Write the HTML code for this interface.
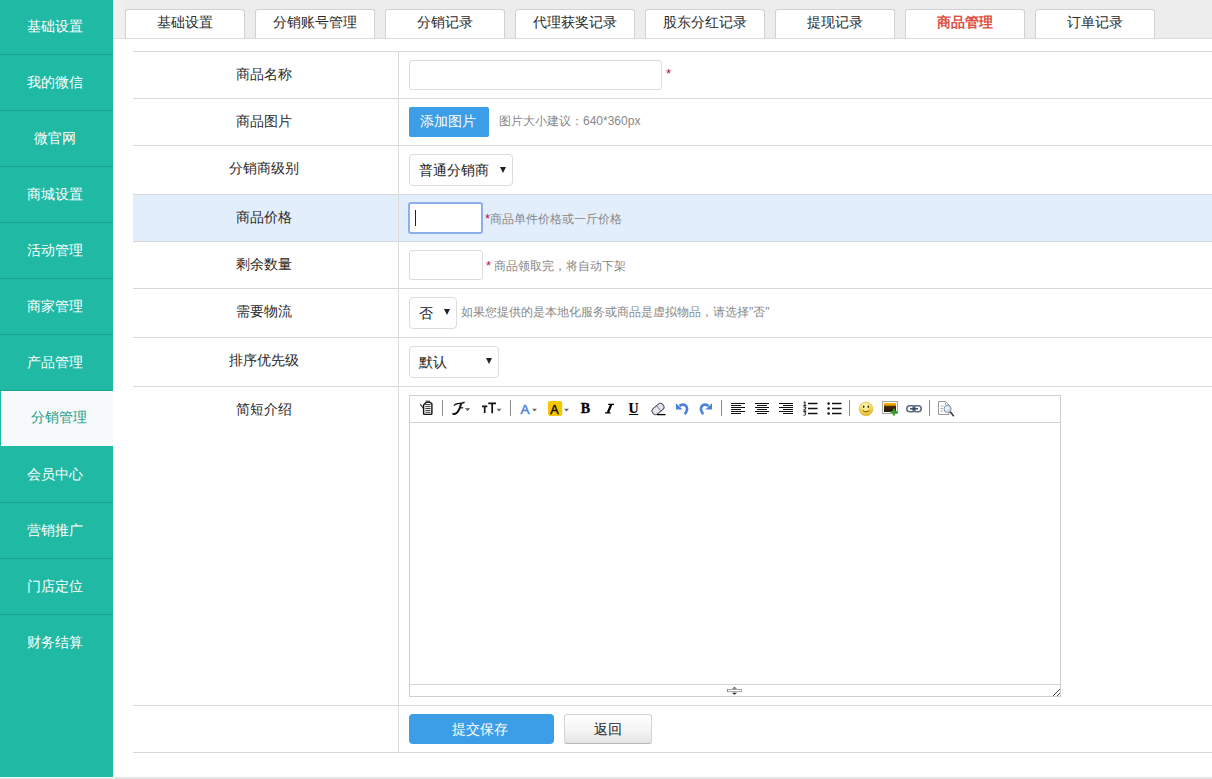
<!DOCTYPE html>
<html><head><meta charset="utf-8">
<style>
*{margin:0;padding:0;box-sizing:border-box}
html,body{width:1212px;height:779px;overflow:hidden;background:#fff;font-family:"Liberation Sans",sans-serif;color:#333}
#side{position:absolute;left:0;top:0;width:113px;height:777px;background:#20b9a4}
#side .it{position:absolute;left:0;width:113px;height:56px;border-bottom:1px solid #16a38f;color:#fff;font-size:14px;line-height:55px;text-align:center;padding-right:3px}
#side .it.on{background:#f6fafa;color:#1a9f8c;border-left:1px solid #20b9a4;padding-left:3px;padding-right:0;border-bottom:0;line-height:53px}
#bottom{position:absolute;left:0;top:777px;width:1212px;height:2px;background:#e6e6e6}
#bottom:before{content:"";position:absolute;left:0;top:0;width:113px;height:1px;background:#e8f8f6}
#tabbar{position:absolute;left:113px;top:0;width:1099px;height:39px;background:#ededed;border-bottom:1px solid #dcdcdc}
.tab{position:absolute;top:9px;width:120px;height:29px;background:#fff;border:1px solid #d2d2d2;border-bottom:0;border-radius:3px 3px 0 0;font-size:14px;line-height:24px;text-align:center;color:#2a2a2a}
.tab.on{color:#de4f43;font-weight:bold}
#tbl{position:absolute;left:133px;top:51px;width:1079px}
.row{position:absolute;left:0;width:1079px;border-top:1px solid #d8d8d8}
.row .lab{position:absolute;left:0;top:0;width:262px;text-align:center;font-size:14px;line-height:20px;padding-top:12px;color:#2a2a2a}
.row .val{position:absolute;left:265px;top:0;bottom:0;border-left:1px solid #e2e2e2;width:814px}
.inp{position:absolute;border:1px solid #dcdcdc;border-radius:3px;background:#fff}
.req{position:absolute;color:#b8123a;font-size:13px}
.hint{position:absolute;color:#888;font-size:12px;white-space:nowrap}
.sel{position:absolute;border:1px solid #dcdcdc;border-radius:4px;background:#fff;font-size:14px;color:#222}
.sel span{position:absolute;left:9px;top:0}
.sel i{position:absolute;width:0;height:0;border-left:3px solid transparent;border-right:3px solid transparent;border-top:6px solid #222}
#vline{position:absolute;left:265px;top:0;width:1px;height:701px;background:#dcdcdc}
.inp.focus{border:2px solid #8eaee8;border-radius:3px}
#caret{position:absolute;left:5px;top:6px;width:1px;height:16px;background:#222}
em.r{font-style:normal;color:#b8123a;font-size:13px}
#addimg{position:absolute;left:409px;top:107px;width:80px;height:30px;background:#3d9ee8;border-radius:2px;color:#fff;font-size:14px;line-height:29px;text-align:center;padding-right:2px}
#editor{position:absolute;left:409px;top:395px;width:652px;height:302px;border:1px solid #cfcfcf;background:#fff}
#tb{position:absolute;left:0;top:0;width:650px;height:27px;border-bottom:1px solid #d4d4d4}
#ebot{position:absolute;left:0;top:288px;width:650px;height:12px;border-top:1px solid #d4d4d4}
#submit{position:absolute;left:409px;top:714px;width:145px;height:30px;background:#3d9ee8;border-radius:4px;color:#fff;font-size:14px;line-height:30px;text-align:center;padding-right:3px}
#back{position:absolute;left:564px;top:714px;width:88px;height:30px;background:linear-gradient(#fefefe,#f4f4f4 55%,#e4e4e4);border:1px solid #d4d4d4;border-bottom-color:#b8b8b8;border-radius:3px;color:#222;font-size:14px;line-height:28px;text-align:center}
</style></head><body>
<div id="side">
<div class="it" style="top:-1px">基础设置</div>
<div class="it" style="top:55px">我的微信</div>
<div class="it" style="top:111px">微官网</div>
<div class="it" style="top:167px">商城设置</div>
<div class="it" style="top:223px">活动管理</div>
<div class="it" style="top:279px">商家管理</div>
<div class="it" style="top:335px">产品管理</div>
<div class="it on" style="top:391px;height:55px">分销管理</div>
<div class="it" style="top:447px">会员中心</div>
<div class="it" style="top:503px">营销推广</div>
<div class="it" style="top:559px">门店定位</div>
<div class="it" style="top:615px;border-bottom:0">财务结算</div>
</div>
<div id="bottom"></div>
<div id="tabbar"><div style="position:absolute;left:0;top:0;width:11px;height:38px;background:#f1eff0"></div>
<div class="tab" style="left:12px">基础设置</div>
<div class="tab" style="left:142px">分销账号管理</div>
<div class="tab" style="left:272px">分销记录</div>
<div class="tab" style="left:402px">代理获奖记录</div>
<div class="tab" style="left:532px">股东分红记录</div>
<div class="tab" style="left:662px">提现记录</div>
<div class="tab on" style="left:792px">商品管理</div>
<div class="tab" style="left:922px">订单记录</div>
</div>

<div id="tbl">
<div class="row" style="top:0;height:47px"><div class="lab">商品名称</div></div>
<div class="row" style="top:47px;height:47px"><div class="lab">商品图片</div></div>
<div class="row" style="top:94px;height:49px"><div class="lab">分销商级别</div></div>
<div class="row" style="top:143px;height:47px;background:#e2eefb"><div class="lab">商品价格</div></div>
<div class="row" style="top:190px;height:47px"><div class="lab">剩余数量</div></div>
<div class="row" style="top:237px;height:49px"><div class="lab">需要物流</div></div>
<div class="row" style="top:286px;height:49px"><div class="lab">排序优先级</div></div>
<div class="row" style="top:335px;height:319px"><div class="lab">简短介绍</div></div>
<div class="row" style="top:654px;height:47px"></div>
<div class="row" style="top:701px;height:1px"></div>
<div id="vline"></div>
</div>
<!-- controls (absolute page coords) -->
<div class="inp" style="left:409px;top:60px;width:253px;height:30px"></div>
<div class="req" style="left:666px;top:66px">*</div>
<div id="addimg">添加图片</div>
<div class="hint" style="left:499px;top:113px">图片大小建议：640*360px</div>
<div class="sel" style="left:409px;top:154px;width:104px;height:32px"><span style="line-height:30px">普通分销商</span><i style="left:90px;top:12px"></i></div>
<div class="inp focus" style="left:408px;top:202px;width:75px;height:32px"><b id="caret"></b></div>
<div class="hint" style="left:485px;top:211px"><em class="r">*</em>商品单件价格或一斤价格</div>
<div class="inp" style="left:409px;top:250px;width:74px;height:30px"></div>
<div class="hint" style="left:486px;top:258px"><em class="r">*</em> 商品领取完，将自动下架</div>
<div class="sel" style="left:409px;top:297px;width:48px;height:32px"><span style="line-height:30px">否</span><i style="left:34px;top:11px"></i></div>
<div class="hint" style="left:461px;top:304px">如果您提供的是本地化服务或商品是虚拟物品，请选择"否"</div>
<div class="sel" style="left:409px;top:346px;width:90px;height:32px"><span style="line-height:30px">默认</span><i style="left:76px;top:11px"></i></div>
<div id="editor">
<div id="tb"><svg id="tbsvg" width="652" height="28" viewBox="409 395 652 28" style="position:absolute;left:-1px;top:-1px">
<defs>
<radialGradient id="smg" cx="0.45" cy="0.3" r="0.75"><stop offset="0" stop-color="#fffbd0"/><stop offset="0.5" stop-color="#f8e060"/><stop offset="1" stop-color="#e0b020"/></radialGradient>
<linearGradient id="img" x1="0" y1="0" x2="0" y2="1"><stop offset="0" stop-color="#ffc000"/><stop offset="0.25" stop-color="#e89000"/><stop offset="0.4" stop-color="#3a2608"/><stop offset="1" stop-color="#24180a"/></linearGradient>
<radialGradient id="mg" cx="0.4" cy="0.4" r="0.6"><stop offset="0" stop-color="#ffffff"/><stop offset="1" stop-color="#b8cbe0"/></radialGradient>
</defs>
<g fill="none" stroke="#8e8e8e" stroke-width="1" shape-rendering="crispEdges">
<path d="M442.5 400V416M510.5 400V416M721.5 400V416M849.5 400V416M929.5 400V416"/>
</g>
<!-- paste -->
<path d="M420.3 404.3L424 409" stroke="#333" stroke-width="1.2"/>
<path d="M424.8 403.8L426.2 402.4H430.3L431.9 403.8V413.6Q431.9 414.4 431.1 414.4H424.5Q423.6 414.4 423.6 413.6V405Z" fill="#fff" stroke="#111" stroke-width="1.4"/>
<rect x="425.6" y="400.6" width="4.4" height="1.8" fill="#555"/>
<path d="M425.3 404.6H430.5M425.3 406.6H430.5M425.3 408.5H430.5M425.3 410.4H430.5M425.3 412.3H430.5" stroke="#222" stroke-width="0.9"/>
<!-- font family -->
<path d="M454 405.6C455 403.6 458 403.5 460.5 403.3C462 403.2 463.5 402.8 464.6 402.1" stroke="#111" stroke-width="1.3" fill="none"/>
<path d="M461.2 403.3C460.2 407 459.2 411 456.6 413C455.1 414.2 453.6 414.1 452.4 413.6" stroke="#111" stroke-width="2" fill="none"/>
<path d="M459.3 407.8H463.2" stroke="#111" stroke-width="1.2"/>
<path d="M465 408.2H470.2L467.6 411Z" fill="#555"/>
<!-- font size -->
<path d="M482 406.3H487.3M484.7 406.3V413" stroke="#111" stroke-width="1.7"/>
<path d="M488.3 403.3H496M492.2 403.3V413.3" stroke="#111" stroke-width="1.7"/>
<path d="M496.5 408.8H501.5L499 411.6Z" fill="#666"/>
<!-- font color -->
<text x="520.5" y="413.8" font-family="Liberation Sans" font-size="13.5" fill="#4f83d9" stroke="#4f83d9" stroke-width="0.5">A</text>
<path d="M532 408.8H537L534.5 411.6Z" fill="#666"/>
<!-- back color -->
<rect x="548" y="401" width="14.2" height="15" rx="2" fill="#f8c600"/>
<text x="550.3" y="413.6" font-family="Liberation Sans" font-size="12.5" fill="#111" stroke="#111" stroke-width="0.5">A</text>
<path d="M564 408.8H569L566.5 411.6Z" fill="#666"/>
<!-- bold -->
<text x="580.7" y="413" font-family="Liberation Serif" font-weight="bold" font-size="14" fill="#000" stroke="#000" stroke-width="0.3">B</text>
<!-- italic -->
<path d="M608.3 404.4H614M605 412.9H610.5" stroke="#000" stroke-width="1.3"/>
<path d="M611.3 404.5L607.8 412.8" stroke="#000" stroke-width="2.2"/>
<!-- underline -->
<text x="628.4" y="412.9" font-family="Liberation Serif" font-weight="bold" font-size="14" fill="#000" stroke="#000" stroke-width="0.2">U</text>
<path d="M629 414.5H638.2" stroke="#000" stroke-width="1"/>
<!-- eraser -->
<g transform="rotate(-40 658 409)"><rect x="651.5" y="405.5" width="13" height="7" rx="3" fill="#e4e8f2" stroke="#555" stroke-width="1"/><path d="M659 405.5V412.5" stroke="#666" stroke-width="0.8"/></g>
<path d="M657 414.6H665.5" stroke="#000" stroke-width="1.3"/>
<!-- undo -->
<path d="M679.5 405.8C685 402.5 690 407 684.8 414.3" stroke="#4a82d8" stroke-width="2.6" fill="none"/>
<path d="M676 403.3L676 409.6L682.6 409.6Z" fill="#4a82d8"/>
<!-- redo -->
<path d="M708.5 405.8C703 402.5 698 407 703.2 414.3" stroke="#4a82d8" stroke-width="2.6" fill="none"/>
<path d="M712 403.3L712 409.6L705.4 409.6Z" fill="#4a82d8"/>
<!-- align -->
<g stroke="#111" stroke-width="1" shape-rendering="crispEdges">
<path d="M731 403.5H745M731 405.5H741M731 407.5H745M731 409.5H741M731 411.5H745M731 413.5H741"/>
<path d="M755 403.5H769M757 405.5H767M755 407.5H769M757 409.5H767M755 411.5H769M757 413.5H767"/>
<path d="M779 403.5H793M783 405.5H793M779 407.5H793M783 409.5H793M779 411.5H793M783 413.5H793"/>
</g>
<g stroke="#111" stroke-width="1.4">
<path d="M808 403.5H817.5M808 408.5H817.5M808 413.5H817.5"/>
<path d="M832 403.5H841.5M832 408.5H841.5M832 413.5H841.5"/>
</g>
<path d="M803.6 402.6L805 401.8V405.6M803.4 405.6H806.3M803.4 407H805.8V408.3L803.6 410H806.2M803.4 411.6H806L804.6 413.1C806.6 413.2 806.4 415.4 803.4 415.2" fill="none" stroke="#111" stroke-width="1"/>
<circle cx="828.6" cy="403.5" r="1.25" fill="#111"/><circle cx="828.6" cy="408.5" r="1.25" fill="#111"/><circle cx="828.6" cy="413.5" r="1.25" fill="#111"/>
<!-- smiley -->
<circle cx="866" cy="409" r="6.8" fill="url(#smg)" stroke="#d6a72a" stroke-width="0.6"/>
<ellipse cx="863.7" cy="406.8" rx="0.8" ry="1.2" fill="#3a2a10"/><ellipse cx="868.3" cy="406.8" rx="0.8" ry="1.2" fill="#3a2a10"/>
<path d="M862.5 410.3Q866 413.5 869.5 410.3" stroke="#5a3a10" stroke-width="0.9" fill="none"/>
<!-- image -->
<rect x="882.5" y="401.5" width="15" height="12" fill="#fafafa" stroke="#a8a8a8" stroke-width="1"/>
<rect x="884" y="403" width="12" height="9" fill="url(#img)"/>
<path d="M894 408.8V415.5M890.6 412.2H897.4" stroke="#34a02c" stroke-width="2.2"/>
<!-- link -->
<rect x="906.8" y="405.8" width="8.2" height="6" rx="3" fill="#fff" stroke="#5a6b82" stroke-width="1.6"/>
<rect x="913" y="405.8" width="8.2" height="6" rx="3" fill="none" stroke="#5a6b82" stroke-width="1.6"/>
<path d="M910 408.8H918" stroke="#34445a" stroke-width="1.4"/>
<!-- preview -->
<path d="M938.5 401.5H945.5L949 405V414.5H938.5Z" fill="#fff" stroke="#9a9a9a" stroke-width="1"/>
<path d="M945.5 401.5V405H949" fill="none" stroke="#aaa" stroke-width="0.8"/>
<path d="M940.5 406H943.5M940.5 408.5H943M940.5 411H943" stroke="#999" stroke-width="0.8"/>
<circle cx="947.6" cy="409" r="3.6" fill="url(#mg)" stroke="#7d90aa" stroke-width="0.9"/>
<path d="M950.2 411.8L953.8 416.2" stroke="#333" stroke-width="1.5"/>
</svg></div>
<div id="ebot"><svg width="650" height="12" viewBox="410 685 650 12" style="position:absolute;left:0;top:0"><path d="M732 688.8L734.5 686.8L737 688.8Z" fill="#666"/><rect x="727.5" y="689.6" width="14" height="2.2" fill="#fff" stroke="#666" stroke-width="0.6"/><path d="M732 692.8L734.5 694.8L737 692.8Z" fill="#222"/><path d="M1053 696L1060 689M1057 696L1060 693" stroke="#444" stroke-width="1"/></svg></div>
</div>
<div id="submit">提交保存</div>
<div id="back">返回</div>
</body></html>
